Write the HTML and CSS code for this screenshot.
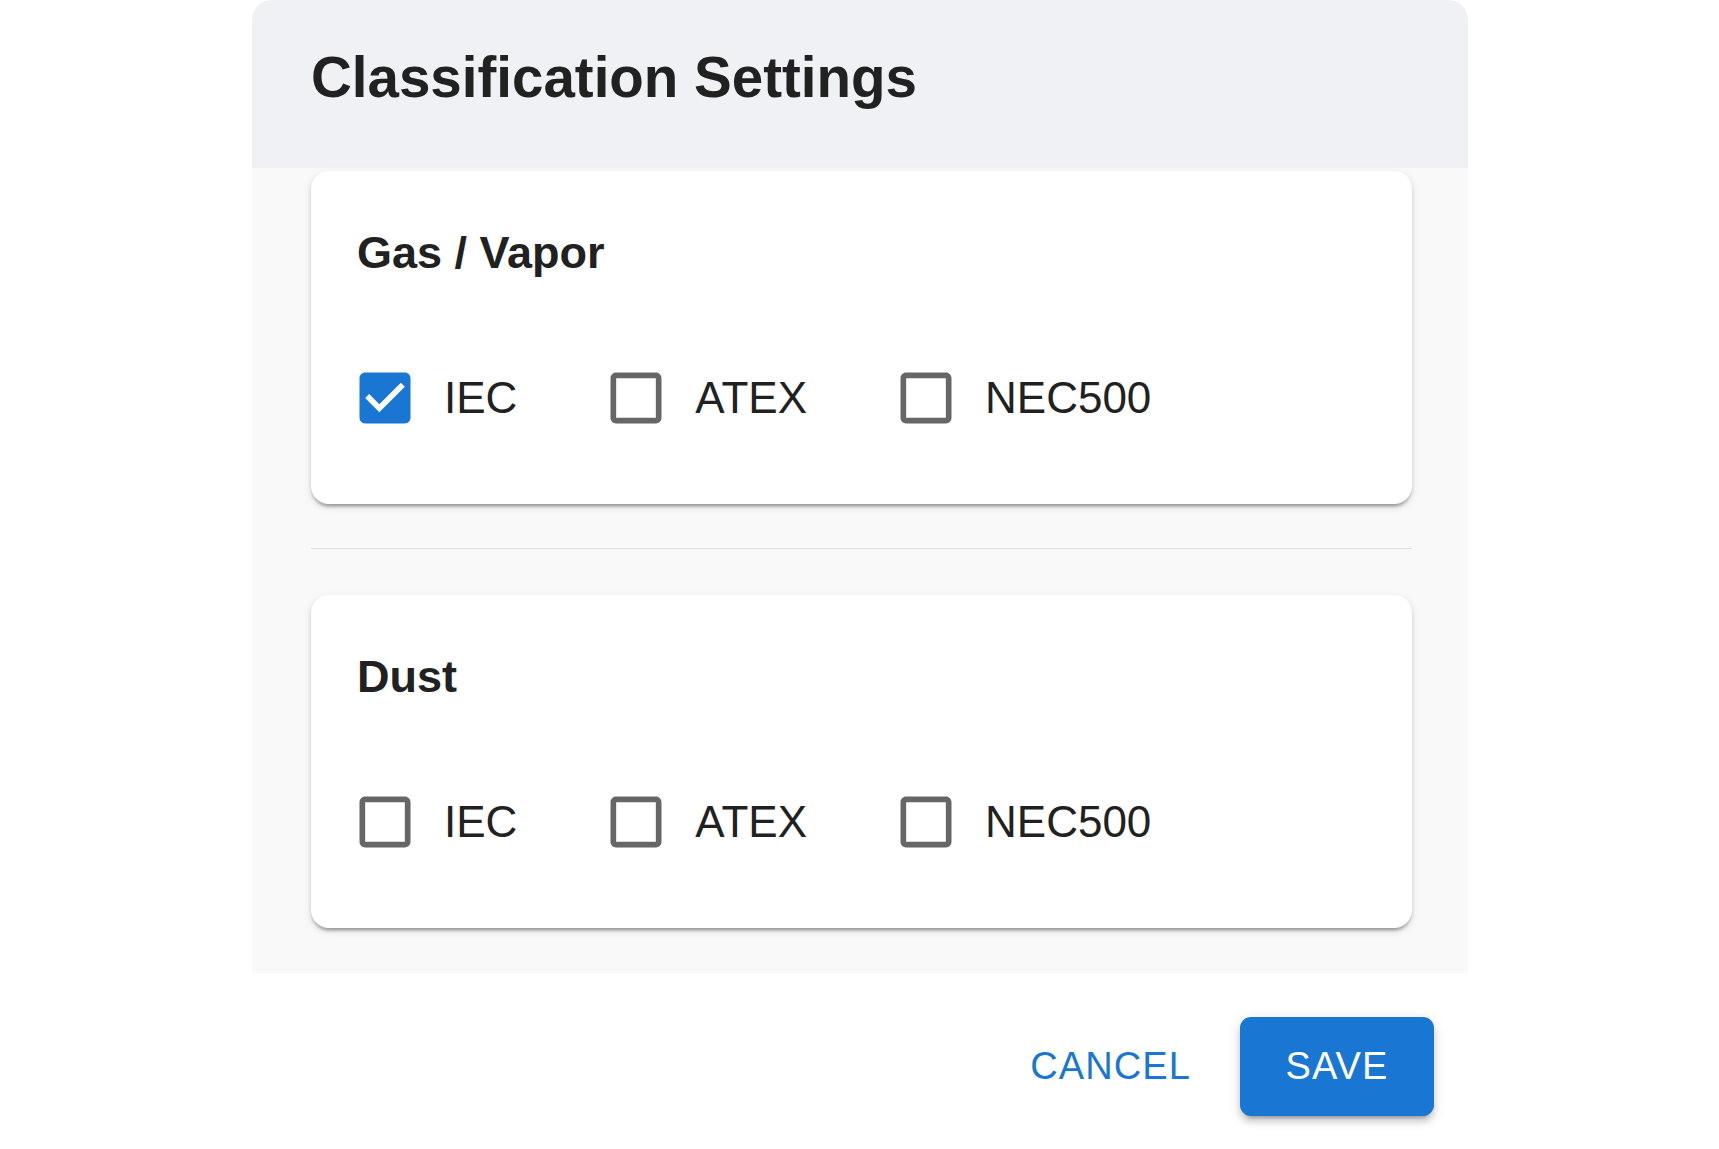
FILE: index.html
```html
<!DOCTYPE html>
<html lang="en">
<head>
  <meta charset="UTF-8">
  <title>Classification Settings</title>
  <link rel="stylesheet" href="styles.css">
</head>
<body>
  <div class="dialog">
    <h2 class="dialog-title">Classification Settings</h2>

    <div class="dialog-content">
      <div class="card">
        <div class="card-title">Gas / Vapor</div>
        <div class="check-row">
          <label class="check-item">
            <svg class="check-icon checked" viewBox="0 0 24 24"><path d="M19 3H5c-1.11 0-2 .9-2 2v14c0 1.1.89 2 2 2h14c1.11 0 2-.9 2-2V5c0-1.1-.89-2-2-2zm-9 14l-5-5 1.41-1.41L10 14.17l7.59-7.59L19 8l-9 9z"/></svg>
            <span>IEC</span>
          </label>
          <label class="check-item">
            <svg class="check-icon" viewBox="0 0 24 24"><path d="M19 5v14H5V5h14m0-2H5c-1.1 0-2 .9-2 2v14c0 1.1.9 2 2 2h14c1.1 0 2-.9 2-2V5c0-1.1-.9-2-2-2z"/></svg>
            <span>ATEX</span>
          </label>
          <label class="check-item">
            <svg class="check-icon" viewBox="0 0 24 24"><path d="M19 5v14H5V5h14m0-2H5c-1.1 0-2 .9-2 2v14c0 1.1.9 2 2 2h14c1.1 0 2-.9 2-2V5c0-1.1-.9-2-2-2z"/></svg>
            <span>NEC500</span>
          </label>
        </div>
      </div>

      <hr class="divider">

      <div class="card">
        <div class="card-title">Dust</div>
        <div class="check-row">
          <label class="check-item">
            <svg class="check-icon" viewBox="0 0 24 24"><path d="M19 5v14H5V5h14m0-2H5c-1.1 0-2 .9-2 2v14c0 1.1.9 2 2 2h14c1.1 0 2-.9 2-2V5c0-1.1-.9-2-2-2z"/></svg>
            <span>IEC</span>
          </label>
          <label class="check-item">
            <svg class="check-icon" viewBox="0 0 24 24"><path d="M19 5v14H5V5h14m0-2H5c-1.1 0-2 .9-2 2v14c0 1.1.9 2 2 2h14c1.1 0 2-.9 2-2V5c0-1.1-.9-2-2-2z"/></svg>
            <span>ATEX</span>
          </label>
          <label class="check-item">
            <svg class="check-icon" viewBox="0 0 24 24"><path d="M19 5v14H5V5h14m0-2H5c-1.1 0-2 .9-2 2v14c0 1.1.9 2 2 2h14c1.1 0 2-.9 2-2V5c0-1.1-.9-2-2-2z"/></svg>
            <span>NEC500</span>
          </label>
        </div>
      </div>
    </div>

    <div class="dialog-actions">
      <button class="btn-text">CANCEL</button>
      <button class="btn-save">SAVE</button>
    </div>
  </div>
</body>
</html>
```

FILE: styles.css
```css
body {
  margin: 0;
  background-color: #fff;
  font-family: "Liberation Sans", Arial, sans-serif;
  color: #212121;
}

.dialog {
  width: 1216px;
  margin-left: 252px;
  border-radius: 20px 20px 0 0;
  overflow: hidden;
  background-color: #fff;
}

.dialog-title {
  margin: 0;
  padding: 32px 56px 45px 59px;
  background-color: #f0f1f4;
  font-size: 56.5px;
  font-weight: bold;
  line-height: 91px;
}

.dialog-content {
  padding: 3px 56px 44px 59px;
  background-color: #f9f9f9;
  box-shadow: 0 1px 2px rgba(0, 0, 0, 0.05);
}

.card {
  box-sizing: border-box;
  height: 333px;
  padding: 48px 46px 0;
  background-color: #fff;
  border-radius: 18px;
  box-shadow: 0 5px 3px -3px rgba(0, 0, 0, 0.2),
              0 3px 3px 0 rgba(0, 0, 0, 0.14),
              0 3px 8px 0 rgba(0, 0, 0, 0.12);
}

.card-title {
  font-size: 45px;
  font-weight: bold;
  line-height: 67px;
  margin-bottom: 78px;
}

.divider {
  margin: 44px 0 46px;
  border: none;
  border-top: 1px solid #e0e0e0;
}

.check-row {
  display: flex;
  align-items: center;
  gap: 85px;
  margin-left: -6px;
  height: 68px;
}

.check-item {
  display: flex;
  align-items: center;
  gap: 25px;
  font-size: 44px;
  line-height: 68px;
  color: #212121;
  cursor: pointer;
}

.check-icon {
  width: 68px;
  height: 68px;
  fill: rgba(0, 0, 0, 0.6);
}

.check-icon.checked {
  fill: #1976d2;
}

.dialog-actions {
  display: flex;
  justify-content: flex-end;
  align-items: center;
  gap: 25px;
  padding: 45px 34px 22px 0;
}

.btn-text,
.btn-save {
  height: 99px;
  border: none;
  border-radius: 11px;
  font-family: "Liberation Sans", Arial, sans-serif;
  font-size: 38px;
  letter-spacing: 1.1px;
  cursor: pointer;
}

.btn-text {
  padding: 0 24px;
  background: none;
  color: #1976d2;
}

.btn-save {
  width: 194px;
  padding: 0;
  background-color: #1976d2;
  color: #fff;
  box-shadow: 0 8px 3px -6px rgba(0, 0, 0, 0.2),
              0 6px 6px 0 rgba(0, 0, 0, 0.14),
              0 3px 14px 0 rgba(0, 0, 0, 0.12);
}
```
